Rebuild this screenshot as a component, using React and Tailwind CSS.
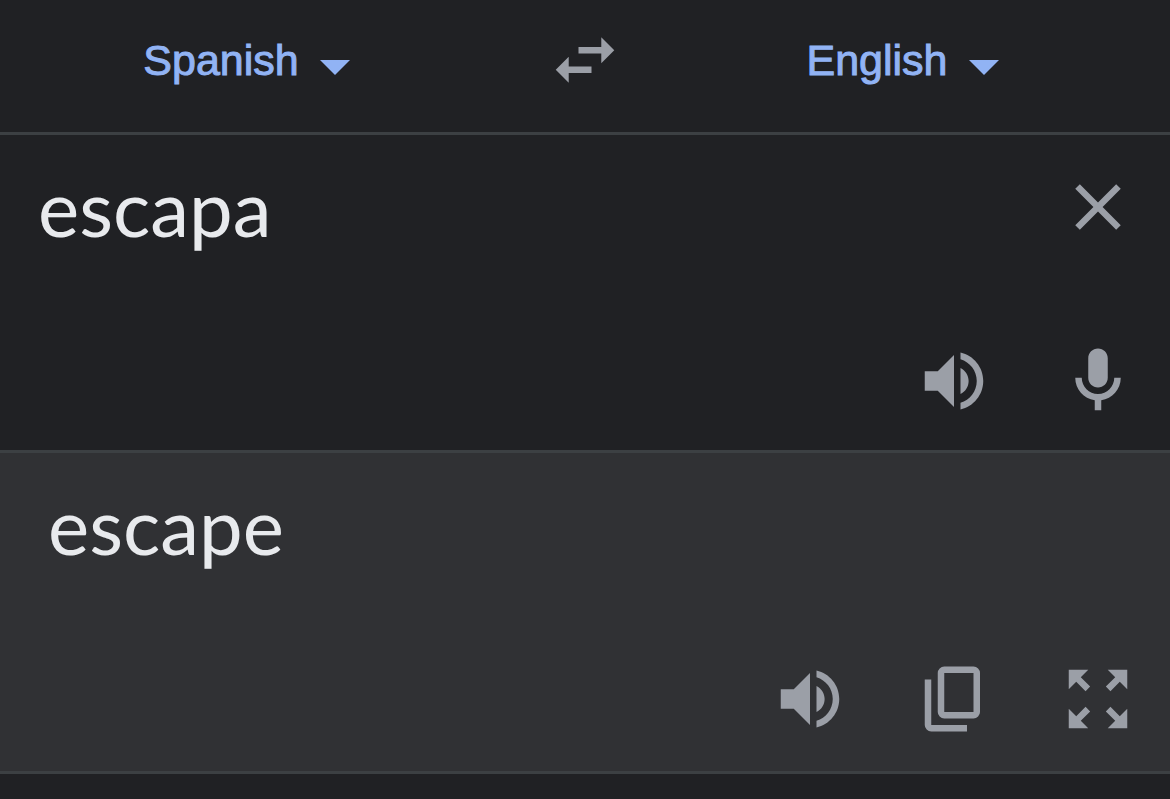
import { useState } from 'react';

const ICONS = {
    swap: 'M6.99 11L3 15l3.99 4v-3H14v-2H6.99v-3zM21 9l-3.99-4v3H10v2h7.01v3L21 9z',
    close: 'M19 6.41L17.59 5 12 10.59 6.41 5 5 6.41 10.59 12 5 17.59 6.41 19 12 13.41 17.59 19 19 17.59 13.41 12z',
    volume: 'M3 9v6h4l5 5V4L7 9H3zm13.5 3c0-1.77-1.02-3.29-2.5-4.03v8.05c1.48-.73 2.5-2.25 2.5-4.02zM14 3.23v2.06c2.89.86 5 3.54 5 6.71s-2.11 5.85-5 6.71v2.06c4.01-.91 7-4.49 7-8.77s-2.99-7.86-7-8.77z',
    mic: 'M12 14c1.66 0 3-1.34 3-3V5c0-1.66-1.34-3-3-3S9 3.34 9 5v6c0 1.66 1.34 3 3 3zm5-3c0 2.76-2.24 5-5 5s-5-2.24-5-5H5c0 3.53 2.61 6.43 6 6.92V21h2v-3.08c3.39-.49 6-3.39 6-6.92h-2z',
    copy: 'M9 18q-.825 0-1.412-.587T7 16V4q0-.825.588-1.412T9 2h9q.825 0 1.413.588T20 4v12q0 .825-.587 1.413T18 18Zm0-2h9V4H9v12Zm-4 6q-.825 0-1.412-.587T3 20V6h2v14h11v2Z',
    expand: 'M15 3l2.3 2.3-2.89 2.87 1.42 1.42L18.7 6.7 21 9V3zM3 9l2.3-2.3 2.87 2.89 1.42-1.42L6.7 5.3 9 3H3zm6 12l-2.3-2.3 2.89-2.87-1.42-1.42L5.3 17.3 3 15v6zm12-6l-2.3 2.3-2.87-2.89-1.42 1.42 2.89 2.87L15 21h6z',
};

const LANGUAGES = ['Spanish', 'English'];

function IconButton({ icon, label, onClick }) {
    return (
        <button type="button" aria-label={label} onClick={onClick} className="block shrink-0 text-[#9b9fa7] cursor-pointer">
            <svg viewBox="0 0 24 24" fill="currentColor" className="block size-[78px]">
                <path d={ICONS[icon]} />
            </svg>
        </button>
    );
}

function LanguageSelect({ label, value, onChange }) {
    return (
        <label className="flex flex-1 items-center justify-center text-[#91b3f4]">
            <select
                aria-label={label}
                value={value}
                onChange={(e) => onChange(e.target.value)}
                className="appearance-none field-sizing-content bg-transparent font-['Liberation_Sans',Arial,sans-serif] text-[43px] leading-[60px] [-webkit-text-stroke:1px_currentColor] outline-none"
            >
                {LANGUAGES.map((lang) => <option key={lang}>{lang}</option>)}
            </select>
            <svg viewBox="0 -2 24 24" fill="currentColor" className="size-[72px] shrink-0" aria-hidden="true">
                <path d="M7 10l5 5 5-5z" />
            </svg>
        </label>
    );
}

export default function App() {
    const [from, setFrom] = useState('Spanish');
    const [to, setTo] = useState('English');
    const [text, setText] = useState('escapa');

    const swap = () => {
        setFrom(to);
        setTo(from);
    };

    return (
        <div className="min-h-screen bg-[#202124] font-[Lato,sans-serif] text-[#e8eaed]">
            <header className="flex items-center border-b-3 border-[#3c4043] pt-[21px] pb-[33px]">
                <LanguageSelect label="Source language" value={from} onChange={setFrom} />
                <div className="px-8">
                    <IconButton icon="swap" label="Swap languages" onClick={swap} />
                </div>
                <LanguageSelect label="Target language" value={to} onChange={setTo} />
            </header>

            <main>
                <section className="border-b-3 border-[#3c4043] pt-[33px] pr-[33px] pb-[30px] pl-[38px]">
                    <div className="flex items-start justify-between">
                        <textarea
                            aria-label="Source text"
                            rows={1}
                            value={text}
                            onChange={(e) => setText(e.target.value)}
                            className="block h-[96px] min-w-0 flex-1 resize-none overflow-hidden bg-transparent text-[78px] leading-[78px] outline-none"
                        />
                        <IconButton icon="close" label="Clear text" onClick={() => setText('')} />
                    </div>
                    <div className="mt-[78px] flex justify-end gap-[66px]">
                        <IconButton icon="volume" label="Listen to source text" />
                        <IconButton icon="mic" label="Speak" />
                    </div>
                </section>

                <section className="border-b-3 border-[#3c4043] bg-[#303134] pt-[33px] pr-[33px] pb-[33px] pl-[48px]">
                    <p className="min-h-[96px] text-[78px] leading-[78px]">escape</p>
                    <div className="mt-[78px] flex justify-end gap-[66px]">
                        <IconButton icon="volume" label="Listen to translation" />
                        <IconButton icon="copy" label="Copy translation" />
                        <IconButton icon="expand" label="Full screen" />
                    </div>
                </section>
            </main>
        </div>
    );
}
